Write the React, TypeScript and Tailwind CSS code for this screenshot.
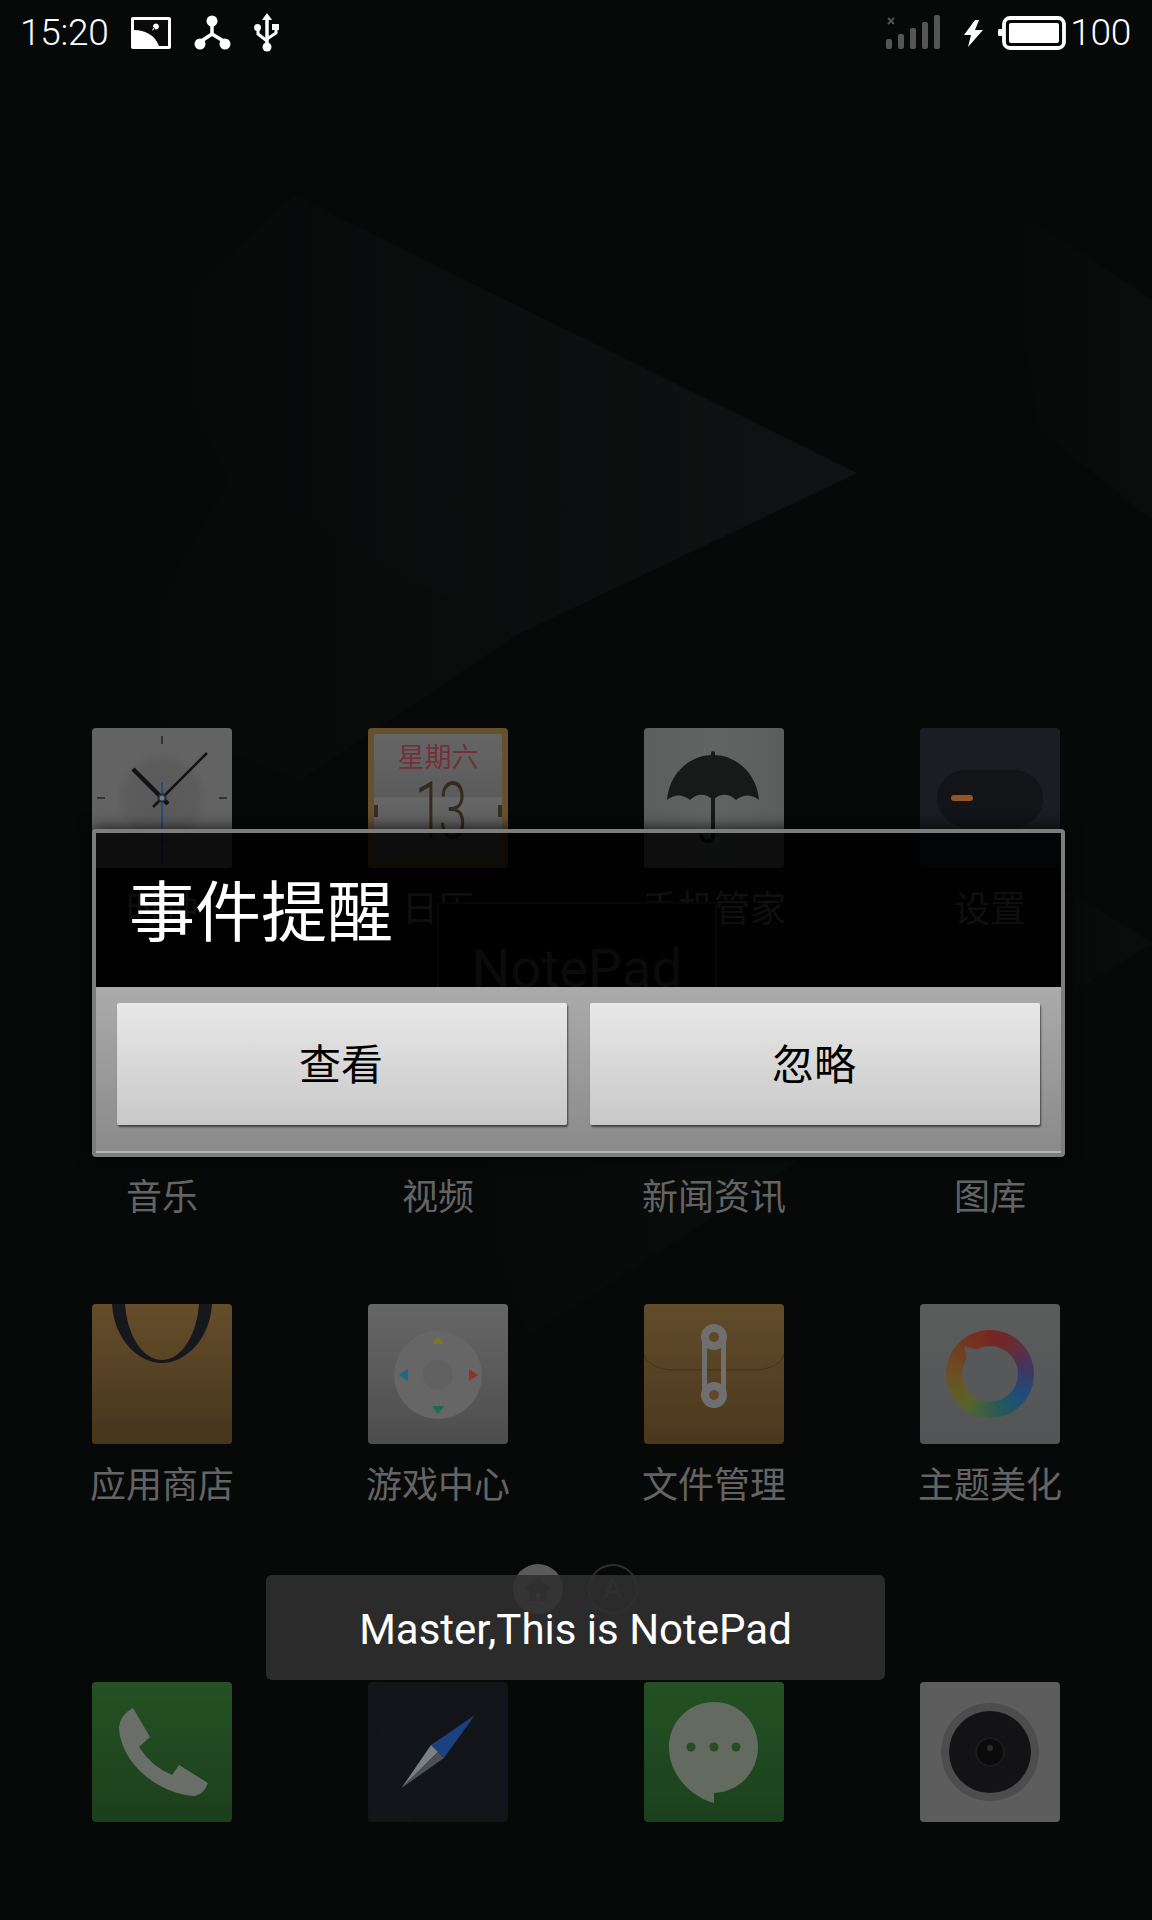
import React from "react";

const cjk = "font-['Roboto','Noto_Sans_CJK_SC',sans-serif]";

function Square({ className = "", children }: { className?: string; children?: React.ReactNode }) {
  return <div className={`w-[140px] h-[140px] shrink-0 rounded-[4px] overflow-hidden brightness-[.88] ${className}`}>{children}</div>;
}

const Vec = ({ children }: { children: React.ReactNode }) => (
  <svg width="140" height="140" viewBox="0 0 140 140" className="block">{children}</svg>
);

function ClockIcon() {
  return (
    <Square className="bg-[#717171]">
      <Vec>
        <defs>
          <radialGradient id="clockShade">
            <stop offset="0%" stopColor="#656565" />
            <stop offset="75%" stopColor="#696969" />
            <stop offset="100%" stopColor="#717171" />
          </radialGradient>
        </defs>
        <circle cx="70" cy="70" r="48" fill="url(#clockShade)" />
        <rect x="69" y="8" width="2" height="8" fill="#3a3a3a" />
        <rect x="5" y="69" width="8" height="2" fill="#3a3a3a" />
        <rect x="127" y="69" width="8" height="2" fill="#3a3a3a" />
        <rect x="69" y="124" width="2" height="8" fill="#3a3a3a" />
        <line x1="70" y1="54" x2="70" y2="136" stroke="#2f5687" strokeWidth="2" />
        <line x1="61" y1="79" x2="115" y2="25" stroke="#151515" strokeWidth="2.5" />
        <line x1="41" y1="41" x2="76" y2="76" stroke="#151515" strokeWidth="4.5" />
        <circle cx="70" cy="70" r="3.5" fill="#8a8a8a" stroke="#1d3555" strokeWidth="2" />
      </Vec>
    </Square>
  );
}

function CalendarIcon() {
  return (
    <Square className="bg-[#755b33] p-[6px]">
      <div className="h-full bg-[linear-gradient(#737373_0%,#686868_49%,#757575_50%,#5f5f5f_100%)] flex flex-col items-center rounded-[2px]">
        <div className={`${cjk} text-[27px] leading-[34px] mt-[7px] text-[#84353f]`}>星期六</div>
        <div className="flex items-center w-full justify-between">
          <span className="w-[4px] h-[12px] bg-[#3a3527]" />
          <span className="inline-block scale-x-[0.65] font-['Roboto',sans-serif] font-light text-[80px] leading-[72px] tracking-[-8px] text-[#3a3120]">13</span>
          <span className="w-[4px] h-[12px] bg-[#3a3527]" />
        </div>
      </div>
    </Square>
  );
}

function UmbrellaIcon() {
  return (
    <Square className="bg-[linear-gradient(90deg,#696b6b,#6f7171_50%,#696b6b)]">
      <Vec>
        <rect x="67" y="23" width="4" height="8" rx="2" fill="#1b1c1c" />
        <path d="M23 72C25 46 45 27 69 27C93 27 113 46 115 72C108 66 99 66 92 72C85 65 76 65 69 72C62 65 53 65 46 72C39 66 30 66 23 72Z" fill="#1b1c1c" />
        <path d="M69 70V108C69 115 57 115 57 106" fill="none" stroke="#1b1c1c" strokeWidth="4" />
      </Vec>
    </Square>
  );
}

function SettingsIcon() {
  return (
    <Square className="bg-[#1d2125] flex items-center justify-center">
      <div className="w-[106px] h-[57px] rounded-full bg-[#14171a] flex items-center pl-[14px]">
        <div className="w-[22px] h-[6px] rounded-full bg-[#a8622a]" />
      </div>
    </Square>
  );
}

function BagIcon() {
  return (
    <Square className="bg-[linear-gradient(#735830,#4f3c20)]">
      <Vec>
        <rect x="0" y="117" width="140" height="23" fill="#523f22" />
        <path d="M20 0C22 35 46 59 70 59C94 59 118 35 120 0H107C105 30 90 56 70 56C50 56 35 30 33 0Z" fill="#1a1a22" />
      </Vec>
    </Square>
  );
}

function GameIcon() {
  return (
    <Square className="bg-[linear-gradient(#747474,#585858)]">
      <Vec>
        <circle cx="70" cy="71" r="44" fill="#747474" />
        <circle cx="70" cy="71" r="15" fill="#6e6e6e" />
        <polygon points="70,32 76,40 64,40" fill="#93842f" />
        <polygon points="70,110 76,102 64,102" fill="#1e7a60" />
        <polygon points="31,71 40,65 40,77" fill="#1c7a9a" />
        <polygon points="110,71 101,65 101,77" fill="#a23b2a" />
      </Vec>
    </Square>
  );
}

function FileIcon() {
  return (
    <Square className="bg-[linear-gradient(#6f5630,#553f22)]">
      <Vec>
        <path d="M0 50C2 60 15 66 32 66H108C125 66 138 60 140 50" fill="none" stroke="#4f3b1c" strokeWidth="1" />
        <rect x="58" y="33" width="5" height="59" fill="#7e7e7e" />
        <rect x="77" y="33" width="5" height="59" fill="#7e7e7e" />
        <circle cx="70" cy="33" r="9" fill="#6b5330" stroke="#7e7e7e" strokeWidth="8" />
        <circle cx="70" cy="91" r="9" fill="#6b5330" stroke="#7e7e7e" strokeWidth="8" />
      </Vec>
    </Square>
  );
}

function ThemeIcon() {
  return (
    <Square className="bg-[linear-gradient(#676969,#5e6061)] flex items-center justify-center">
      <div className="w-[88px] h-[88px] rounded-full bg-[conic-gradient(#8a2b26_0deg,#723440_45deg,#493c72_80deg,#1f5a8a_130deg,#2b6663_165deg,#647032_215deg,#736428_250deg,#7d5026_290deg,#8a2b26_360deg)] flex items-center justify-center">
        <svg width="64" height="64" viewBox="0 0 64 64">
          <circle cx="32" cy="32" r="28" fill="#626465" />
          <polygon points="6,4 24,9 10,24" fill="#626465" />
        </svg>
      </div>
    </Square>
  );
}

function PhoneIcon() {
  return (
    <Square className="bg-[linear-gradient(#2a5c28,#204820)]">
      <Vec>
        <path d="M41 26L58 55L47 65Q60 85 80 93L87 83L116 101Q112 112 103 114C65 112 28 80 27 45Q28 33 41 26Z" fill="#787d76" />
      </Vec>
    </Square>
  );
}

function CompassIcon() {
  return (
    <Square className="bg-[#14171c]">
      <Vec>
        <polygon points="15,0 75,0 40,45 70,70 45,140 0,140" fill="#15181d" />
        <polygon points="107,33 63,63 76,76" fill="#1f4a90" />
        <polygon points="63,63 70,70 33.5,106" fill="#8b9096" />
        <polygon points="70,70 76,76 33.5,106" fill="#565a60" />
      </Vec>
    </Square>
  );
}

function MessageIcon() {
  return (
    <Square className="bg-[linear-gradient(#285c28,#1f4a20)]">
      <Vec>
        <path d="M70 20C95 20 114 40 114 65C114 90 95 110 70 111V121C50 116 25 95 25 65C25 40 45 20 70 20Z" fill="#707a6d" />
        <circle cx="47" cy="65" r="4.5" fill="#2a5a28" />
        <circle cx="70" cy="65" r="4.5" fill="#2a5a28" />
        <circle cx="92" cy="65" r="4.5" fill="#2a5a28" />
      </Vec>
    </Square>
  );
}

function CameraIcon() {
  return (
    <Square className="bg-[#6a6a6a]">
      <Vec>
        <circle cx="70" cy="70" r="49" fill="#585858" />
        <circle cx="70" cy="70" r="41" fill="#161618" />
        <circle cx="70" cy="70" r="14" fill="#0c0c0c" stroke="#1f1f22" strokeWidth="2" />
        <circle cx="70" cy="66" r="3" fill="#333" />
      </Vec>
    </Square>
  );
}

function Blank({ className }: { className: string }) {
  return <Square className={className} />;
}

const apps: { label: string; icon: React.ReactNode }[] = [
  { label: "时钟", icon: <ClockIcon /> },
  { label: "日历", icon: <CalendarIcon /> },
  { label: "手机管家", icon: <UmbrellaIcon /> },
  { label: "设置", icon: <SettingsIcon /> },
  { label: "音乐", icon: <Blank className="bg-[#444]" /> },
  { label: "视频", icon: <Blank className="bg-[#444]" /> },
  { label: "新闻资讯", icon: <Blank className="bg-[#444]" /> },
  { label: "图库", icon: <Blank className="bg-[#444]" /> },
  { label: "应用商店", icon: <BagIcon /> },
  { label: "游戏中心", icon: <GameIcon /> },
  { label: "文件管理", icon: <FileIcon /> },
  { label: "主题美化", icon: <ThemeIcon /> },
];

function StatusBar() {
  return (
    <div className="h-[66px] flex items-center justify-between pl-[20px] pr-[21px] text-white font-['Roboto',sans-serif] font-light text-[37px] leading-[66px]">
      <div className="flex items-center">
        <span className="tracking-[-0.3px]">15:20</span>
        <svg width="40" height="32" viewBox="0 0 40 32" className="ml-[23px]">
          <rect width="40" height="32" rx="2" fill="#fff" />
          <path d="M3 3H37V29H28C24 18 14 13 3 13Z" fill="#0a0a0a" />
          <path d="M25 6.5a3 3 0 1 1 -0.1 0M22.5 10L21 14L24 11.5Z" fill="#fff" />
        </svg>
        <svg width="38" height="36" viewBox="0 0 38 36" className="ml-[23px]">
          <g stroke="#fff" strokeWidth="3.5" fill="#fff">
            <line x1="18" y1="7" x2="18" y2="19" />
            <line x1="18" y1="19" x2="6" y2="27" />
            <line x1="18" y1="19" x2="31" y2="27" />
          </g>
          <circle cx="18" cy="6" r="5.5" fill="#fff" />
          <circle cx="6" cy="29" r="5.5" fill="#fff" />
          <circle cx="31" cy="29" r="5.5" fill="#fff" />
        </svg>
        <svg width="26" height="40" viewBox="0 0 26 40" className="ml-[22px]">
          <polygon points="13,0 18,7 8,7" fill="#fff" />
          <line x1="13" y1="6" x2="13" y2="34" stroke="#fff" strokeWidth="3.5" />
          <circle cx="13" cy="34" r="4.5" fill="#fff" />
          <path d="M4 15V21L13 28M22 15V20L13 26" fill="none" stroke="#fff" strokeWidth="3" />
          <circle cx="3.5" cy="14.5" r="3.5" fill="#fff" />
          <rect x="18" y="11" width="7" height="6" fill="#fff" />
        </svg>
      </div>
      <div className="flex items-center">
        <svg width="54" height="36" viewBox="0 0 54 36">
          <g fill="#555555">
            <rect x="0" y="24" width="6" height="10" rx="2" />
            <rect x="12" y="19" width="6" height="15" rx="2" />
            <rect x="24" y="13" width="6" height="21" rx="2" />
            <rect x="36" y="7" width="6" height="27" rx="2" />
            <rect x="48" y="0" width="6" height="34" rx="2" />
          </g>
          <path d="M2 3L8 9M8 3L2 9" stroke="#555555" strokeWidth="1.8" />
        </svg>
        <svg width="20" height="27" viewBox="0 0 20 27" className="ml-[24px]">
          <polygon points="11,0 0,15 7,15 4,27 19,10 11,10 15,0" fill="#fff" />
        </svg>
        <svg width="68" height="34" viewBox="0 0 68 34" className="ml-[14px]">
          <rect x="0" y="13" width="5" height="7" rx="1.5" fill="#fff" />
          <rect x="6" y="2" width="60" height="30" rx="6" fill="none" stroke="#fff" strokeWidth="3.8" />
          <rect x="11" y="7" width="50" height="20" rx="2" fill="#fff" />
        </svg>
        <span className="ml-[4px] tracking-[-0.3px]">100</span>
      </div>
    </div>
  );
}

function AppCell({ label, icon }: { label: string; icon: React.ReactNode }) {
  return (
    <div className="flex flex-col items-center h-[204px]">
      {icon}
      <div className={`${cjk} mt-[20px] text-[36px] leading-[44px] text-[#646464] whitespace-nowrap`}>{label}</div>
    </div>
  );
}

export default function App() {
  return (
    <div className="relative w-[1152px] h-[1920px] overflow-hidden bg-[#070909]">
      <svg width="1152" height="1920" viewBox="0 0 1152 1920" className="absolute inset-0">
        <defs>
          <linearGradient id="facetA" x1="0" y1="0" x2="1" y2="0">
            <stop offset="0%" stopColor="#070909" />
            <stop offset="100%" stopColor="#101213" />
          </linearGradient>
          <linearGradient id="facetB" x1="0" y1="0" x2="1" y2="0">
            <stop offset="0%" stopColor="#070909" />
            <stop offset="100%" stopColor="#0b0d0d" />
          </linearGradient>
        </defs>
        <polygon points="294,196 857,473 514,636 230,480 150,330" fill="url(#facetA)" />
        <polygon points="230,480 514,636 300,780 100,700" fill="url(#facetB)" />
        <polygon points="1152,943 1020,860 1010,1030" fill="url(#facetB)" />
        <polygon points="800,1160 530,1335 450,1160" fill="url(#facetB)" />
        <polygon points="1000,200 1152,300 1152,520 1040,430" fill="url(#facetB)" />
      </svg>

      <div className="relative flex flex-col">
        <StatusBar />

        <div className="mt-[662px] px-6 grid grid-cols-4 gap-y-[84px]">
          {apps.map((a) => (
            <AppCell key={a.label} label={a.label} icon={a.icon} />
          ))}
        </div>

        <div className="mt-[56px] pl-[513px] flex items-center gap-[25px]">
          <div className="w-[50px] h-[50px] rounded-full bg-[#5a5a5a] flex items-center justify-center">
            <svg width="26" height="26" viewBox="0 0 26 26">
              <polygon points="13,1 26,13 22,13 22,25 15,25 15,17 11,17 11,25 4,25 4,13 0,13" fill="#303030" />
            </svg>
          </div>
          <div className="w-[50px] h-[50px] rounded-full border-2 border-[#2e2e2e] flex items-center justify-center font-['Roboto',sans-serif] text-[28px] text-[#2e2e2e]">
            A
          </div>
        </div>

        <div className="mt-[68px] px-6 grid grid-cols-4">
          {[<PhoneIcon key="p" />, <CompassIcon key="c" />, <MessageIcon key="m" />, <CameraIcon key="cam" />].map((ic, i) => (
            <div key={i} className="flex justify-center">
              {ic}
            </div>
          ))}
        </div>
      </div>

      {/* Activity behind the dialog */}
      <div className="absolute left-[437px] top-[902px] w-[280px] h-[130px] bg-black border-2 border-[#333333] flex justify-center pt-[33px]">
        <span className="font-['Roboto',sans-serif] text-[54px] leading-[64px] tracking-[0.2px] text-[#4a4a4a]">NotePad</span>
      </div>

      {/* Dialog */}
      <div className="absolute left-[92px] top-[829px] w-[973px] h-[328px] rounded-[4px] border-4 border-[#7d7d7d] flex flex-col shadow-[0_0_16px_rgba(0,0,0,0.85)]">
        <div className={`${cjk} h-[154px] shrink-0 bg-black/85 pl-[33px] pt-[8px] flex items-center text-white text-[66px] leading-[80px]`}>
          事件提醒
        </div>
        <div className="flex-1 bg-[linear-gradient(#ababab,#8a8a8a)] border-b-2 border-[#b4b4b4] flex gap-[23px] pl-[21px] pr-[21px] pt-[16px]">
          {["查看", "忽略"].map((t) => (
            <div
              key={t}
              className={`${cjk} w-[450px] h-[122px] pt-[3px] pr-[2px] rounded-[2px] bg-[linear-gradient(#e8e8e8,#c8c8c8)] shadow-[1px_2px_2px_rgba(0,0,0,0.55)] flex items-center justify-center text-black text-[42px]`}
            >
              {t}
            </div>
          ))}
        </div>
      </div>

      {/* Toast */}
      <div className="absolute left-[266px] top-[1575px] w-[619px] h-[105px] pt-[3px] rounded-[6px] bg-[#303030]/90 flex items-center justify-center font-['Roboto',sans-serif] text-[42px] text-white">
        Master,This is NotePad
      </div>
    </div>
  );
}
